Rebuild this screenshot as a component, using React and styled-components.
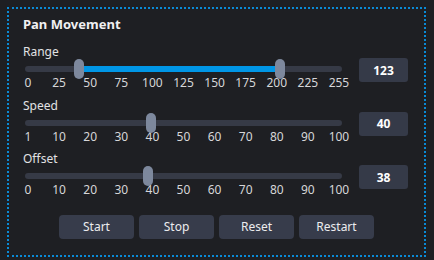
import React from "react";
import styled, { createGlobalStyle } from "styled-components";

const Global = createGlobalStyle`
  html, body { margin: 0; padding: 0; background: #1e1f23; }
  body { font-family: "Noto Sans", "Open Sans", sans-serif; color: #e4e4e6; }
  * { box-sizing: border-box; }
`;

const Panel = styled.div`
  margin: 7px;
  width: 419px;
  height: 250px;
  border: 2px dotted #0a8ad6;
  padding: 7px 16px 0 14px;
  display: flex;
  flex-direction: column;
`;

const Title = styled.div`
  font-size: 13px;
  font-weight: 700;
  line-height: 16px;
  color: #f0f0f2;
  margin-bottom: 13px;
`;

const Section = styled.div`
  display: flex;
  flex-direction: column;
  & + & { margin-top: 9.5px; }
`;

const Label = styled.div`
  font-size: 12px;
  line-height: 14px;
  color: #e2e2e4;
`;

const SliderGrid = styled.div`
  margin-left: 2px;
  display: grid;
  grid-template-columns: 317px 49px;
  grid-template-rows: 20px auto;
  column-gap: 17px;
`;

const Track = styled.div`
  position: relative;
  grid-column: 1;
  grid-row: 1;
  &::before {
    content: "";
    position: absolute;
    left: 0;
    right: 0;
    top: 7px;
    height: 6px;
    border-radius: 3px;
    background: #363a46;
  }
`;

const Fill = styled.div`
  position: absolute;
  top: 7px;
  height: 6px;
  background: #0096e6;
`;

const Thumb = styled.div`
  position: absolute;
  top: 0;
  width: 10px;
  height: 20px;
  border-radius: 5px;
  background: #7d889d;
`;

const Ticks = styled.div`
  grid-column: 1;
  grid-row: 2;
  margin-top: -2px;
  padding: 0 3px;
  display: flex;
  justify-content: space-between;
  font-size: 12px;
  line-height: 12px;
  color: #d6d6d8;
`;

const Tick = styled.span`
  width: 0;
  display: flex;
  justify-content: center;
  white-space: nowrap;
`;

const ValueBox = styled.div`
  grid-column: 2;
  grid-row: 1 / span 2;
  align-self: start;
  margin-top: -1px;
  height: 24px;
  border-radius: 3px;
  background: #353a48;
  display: flex;
  align-items: center;
  justify-content: center;
  font-size: 12px;
  font-weight: 700;
  color: #ffffff;
`;

const Buttons = styled.div`
  margin-top: 19px;
  margin-left: 2px;
  display: flex;
  justify-content: center;
  gap: 5px;
`;

const Button = styled.button`
  width: 75px;
  height: 24px;
  border: none;
  border-radius: 4px;
  background: #373c4b;
  color: #ececee;
  font-family: inherit;
  font-size: 12px;
  line-height: 12px;
  padding: 0;
`;

const pos = (v, min, max) => `calc((100% - 10px) * ${(v - min) / (max - min)})`;
const center = (v, min, max) => `calc((100% - 10px) * ${(v - min) / (max - min)} + 5px)`;

function Slider({ label, ticks, min, max, values, display, range }) {
  return (
    <Section>
      <Label>{label}</Label>
      <SliderGrid>
        <Track>
          {range && (
            <Fill
              style={{
                left: center(values[0], min, max),
                width: `calc((100% - 10px) * ${(values[1] - values[0]) / (max - min)})`,
              }}
            />
          )}
          {values.map((v, i) => (
            <Thumb key={i} style={{ left: pos(v, min, max) }} />
          ))}
        </Track>
        <Ticks>
          {ticks.map((t) => (
            <Tick key={t}>{t}</Tick>
          ))}
        </Ticks>
        <ValueBox>{display}</ValueBox>
      </SliderGrid>
    </Section>
  );
}

export default function App() {
  return (
    <>
      <Global />
      <Panel>
        <Title>Pan Movement</Title>
        <Slider
          label="Range"
          ticks={[0, 25, 50, 75, 100, 125, 150, 175, 200, 225, 255]}
          min={0}
          max={255}
          values={[41, 208]}
          display="123"
          range
        />
        <Slider
          label="Speed"
          ticks={[1, 10, 20, 30, 40, 50, 60, 70, 80, 90, 100]}
          min={1}
          max={100}
          values={[40]}
          display="40"
        />
        <Slider
          label="Offset"
          ticks={[0, 10, 20, 30, 40, 50, 60, 70, 80, 90, 100]}
          min={0}
          max={100}
          values={[38.4]}
          display="38"
        />
        <Buttons>
          <Button>Start</Button>
          <Button>Stop</Button>
          <Button>Reset</Button>
          <Button>Restart</Button>
        </Buttons>
      </Panel>
    </>
  );
}
